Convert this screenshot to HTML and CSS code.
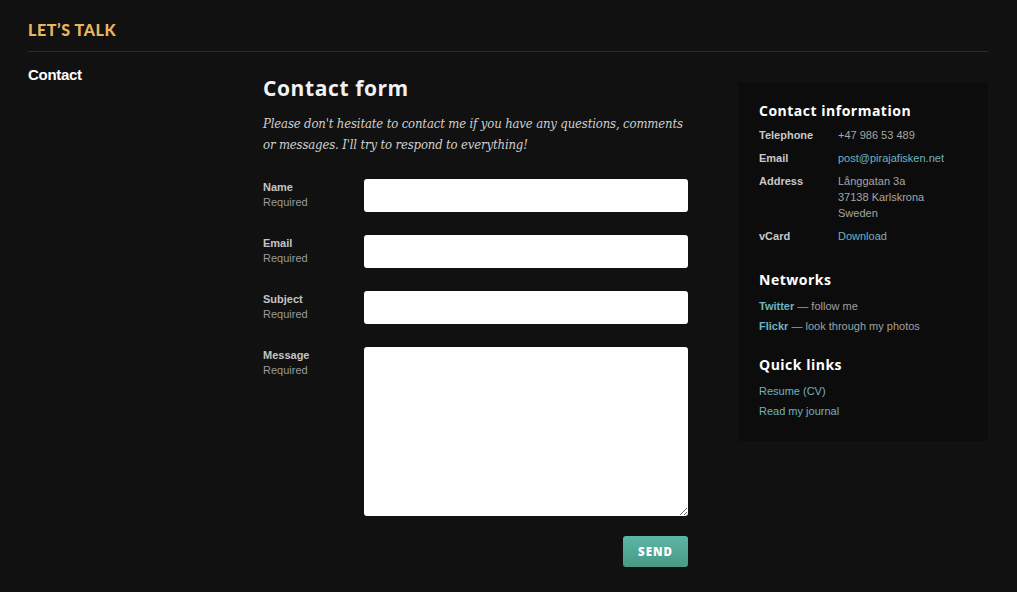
FILE: index.html
```html
<!DOCTYPE html>
<html>
<head>
<meta charset="utf-8">
<link rel="stylesheet" href="styles.css">
</head>
<body>
<div class="page">
  <header class="top">
    <div class="brand">LET’S TALK</div>
  </header>
  <div class="layout">
    <nav class="side-nav"><a class="nav-item">Contact</a></nav>
    <main class="main">
      <h1 class="title">Contact form</h1>
      <p class="intro">Please don't hesitate to contact me if you have any questions, comments or messages. I'll try to respond to everything!</p>
      <form class="form">
        <div class="row">
          <div class="label"><b>Name</b><span>Required</span></div>
          <input class="field" type="text">
        </div>
        <div class="row">
          <div class="label"><b>Email</b><span>Required</span></div>
          <input class="field" type="text">
        </div>
        <div class="row">
          <div class="label"><b>Subject</b><span>Required</span></div>
          <input class="field" type="text">
        </div>
        <div class="row">
          <div class="label"><b>Message</b><span>Required</span></div>
          <textarea class="field area"></textarea>
        </div>
        <div class="actions"><button type="button" class="send">SEND</button></div>
      </form>
    </main>
    <aside class="info">
      <h2 class="info-title">Contact information</h2>
      <dl class="details">
        <dt>Telephone</dt><dd>+47 986 53 489</dd>
        <dt>Email</dt><dd><a class="link">post@pirajafisken.net</a></dd>
        <dt>Address</dt><dd>Långgatan 3a<br>37138 Karlskrona<br>Sweden</dd>
        <dt>vCard</dt><dd><a class="link">Download</a></dd>
      </dl>
      <h2 class="info-title">Networks</h2>
      <ul class="list">
        <li><a class="link strong">Twitter</a> — follow me</li>
        <li><a class="link strong">Flickr</a> — look through my photos</li>
      </ul>
      <h2 class="info-title">Quick links</h2>
      <ul class="list">
        <li><a class="link">Resume (CV)</a></li>
        <li><a class="link">Read my journal</a></li>
      </ul>
    </aside>
  </div>
</div>
</body>
</html>
```
FILE: styles.css
```css
html, body { margin: 0; padding: 0; }
body {
  background: #111111;
  color: #aaaaaa;
  font-family: "Liberation Sans", Arial, sans-serif;
  font-size: 11px;
}
.page { padding: 0 29px 0 28px; }
.top {
  height: 51px;
  border-bottom: 1px solid #2b2b2b;
  display: flex;
  align-items: flex-start;
}
.brand {
  margin-top: 21px;
  font-family: Lato, sans-serif;
  font-weight: 900;
  font-size: 16px;
  line-height: 18px;
  letter-spacing: 0.6px;
  color: #e9b65e;
}
.layout {
  display: flex;
  align-items: flex-start;
}
.side-nav { width: 235px; padding-top: 14px; }
.nav-item {
  color: #ffffff;
  font-weight: bold;
  font-size: 15px;
  letter-spacing: -0.3px;
}
.main { width: 425px; padding-top: 23px; }
.title {
  margin: 0;
  font-family: "Open Sans", sans-serif;
  font-weight: bold;
  font-size: 21px;
  line-height: 26px;
  letter-spacing: 0.6px;
  color: #f2f2f2;
}
.intro {
  margin: 12px 0 0;
  font-family: "DejaVu Serif", serif;
  font-stretch: condensed;
  font-style: italic;
  font-size: 13px;
  line-height: 21px;
  color: #cfcfcf;
  width: 425px;
  letter-spacing: -0.15px;
}
.form { margin-top: 24px; width: 425px; }
.row {
  display: flex;
  margin-bottom: 23px;
}
.label {
  width: 101px;
  display: flex;
  flex-direction: column;
  padding-top: 1px;
  line-height: 15px;
}
.label b { color: #c4c4c4; font-size: 11px; }
.label span { color: #9b9b9b; font-size: 11px; }
.field {
  width: 324px;
  height: 33px;
  box-sizing: border-box;
  border: none;
  border-radius: 3px;
  background: #ffffff;
  margin: 0;
  padding: 0;
  display: block;
}
.area { height: 169px; resize: vertical; }
.actions {
  display: flex;
  justify-content: flex-end;
  margin-top: -3px;
}
.send {
  width: 65px;
  height: 31px;
  border: none;
  border-radius: 3px;
  background: linear-gradient(#5bb7a4, #4a9886);
  color: #ffffff;
  font-family: "Open Sans", sans-serif;
  font-weight: 800;
  font-size: 11.5px;
  letter-spacing: 1px;
  padding: 0;
}
.info {
  margin-left: 50px;
  margin-top: 30px;
  width: 250px;
  box-sizing: border-box;
  background: #0c0c0c;
  padding: 19px 21px 20px;
}
.info-title {
  margin: 0 0 6px;
  font-family: "Open Sans", sans-serif;
  font-weight: bold;
  font-size: 14px;
  line-height: 20px;
  letter-spacing: 0.5px;
  color: #ffffff;
}
.details {
  display: grid;
  grid-template-columns: 79px 1fr;
  row-gap: 7px;
  margin: 0 0 26px;
  line-height: 16px;
}
.details dt { color: #c8c8c8; font-weight: bold; }
.details dd { margin: 0; color: #a6a6a6; }
.list {
  list-style: none;
  margin: 0 0 19px;
  padding: 0;
  line-height: 20px;
  color: #a0a0a0;
}
.list:last-child { margin-bottom: 0; }
.link { color: #6fb3c0; }
.strong { font-weight: bold; }
```
